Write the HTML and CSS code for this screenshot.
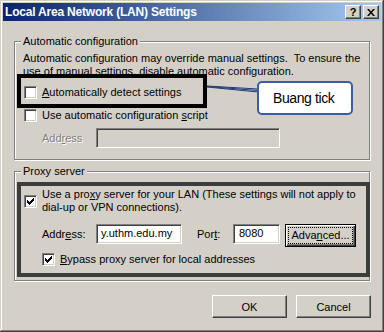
FILE: index.html
```html
<!DOCTYPE html>
<html lang="en">
<head>
  <meta charset="UTF-8">
  <title>Local Area Network (LAN) Settings</title>
  <link rel="stylesheet" href="styles.css">
</head>
<body>
  <div class="window">
    <div class="titlebar">
      <span class="title">Local Area Network (LAN) Settings</span>
      <span class="cap-buttons">
        <span class="cap-btn help">?</span>
        <span class="cap-btn">
          <svg width="8" height="7" viewBox="0 0 8 7"><path d="M0 0h2l2 2.5L6 0h2L5 3.5 8 7H6L4 4.5 2 7H0l3-3.5z"/></svg>
        </span>
      </span>
    </div>

    <div class="content">
      <fieldset class="group">
        <legend>Automatic configuration</legend>
        <p class="desc">Automatic configuration may override manual settings.&nbsp; To ensure the<br>use of manual settings, disable automatic configuration.</p>

        <div class="check-row first">
          <span class="check"></span>
          <span><u>A</u>utomatically detect settings</span>
        </div>
        <div class="check-row second">
          <span class="check"></span>
          <span>Use automatic configuration <u>s</u>cript</span>
        </div>
        <div class="field-row script-row">
          <span class="field-label disabled">Add<u>r</u>ess</span>
          <span class="textbox disabled-box script-box"></span>
        </div>
      </fieldset>

      <fieldset class="group proxy">
        <legend>Proxy server</legend>
        <div class="check-row proxy-row">
          <span class="check"><svg class="tick" width="7" height="7" viewBox="0 0 7 7"><path d="M6 0h1v3H6zM5 1h1v3H5zM4 2h1v3H4zM3 3h1v3H3zM2 4h1v3H2zM1 3h1v3H1zM0 2h1v3H0z"/></svg></span>
          <span class="two-lines">Use a pro<u>x</u>y server for your LAN (These settings will not apply to<br>dial-up or VPN connections).</span>
        </div>
        <div class="field-row proxy-fields">
          <span class="field-label">Addr<u>e</u>ss:</span>
          <span class="textbox addr-box">y.uthm.edu.my</span>
          <span class="field-label port-label">Por<u>t</u>:</span>
          <span class="textbox port-box">8080</span>
          <span class="btn default"><span class="focus">Adva<u>n</u>ced...</span></span>
        </div>
        <div class="check-row bypass-row">
          <span class="check"><svg class="tick" width="7" height="7" viewBox="0 0 7 7"><path d="M6 0h1v3H6zM5 1h1v3H5zM4 2h1v3H4zM3 3h1v3H3zM2 4h1v3H2zM1 3h1v3H1zM0 2h1v3H0z"/></svg></span>
          <span><u>B</u>ypass proxy server for local addresses</span>
        </div>
      </fieldset>

      <div class="actions">
        <span class="btn">OK</span>
        <span class="btn">Cancel</span>
      </div>
    </div>

    <!-- annotations drawn over the dialog -->
    <div class="mark mark-detect"></div>
    <div class="mark mark-proxy"></div>
    <svg class="connector" width="54" height="12" viewBox="0 0 54 12">
      <path d="M1 2 L52 5 M1 3 L52 8 M1 2.5 L52 6.5" stroke="#1f3a7a" stroke-width="1" fill="none"/>
    </svg>
    <div class="callout">Buang tick</div>
  </div>
</body>
</html>
```

FILE: styles.css
```css
body {
  margin: 0;
  font-family: "Liberation Sans", Arial, sans-serif;
  font-size: 11px;
  color: #000;
  background: #d4d0c8;
}

.window {
  position: relative;
  width: 384px;
  height: 332px;
  box-sizing: border-box;
  padding: 3px;
  background: #d4d0c8;
  box-shadow: inset -1px -1px #404040, inset 1px 1px #d4d0c8,
              inset -2px -2px #808080, inset 2px 2px #fff;
}

/* title bar */
.titlebar {
  display: flex;
  align-items: center;
  height: 18px;
  padding: 0 2px;
  background: linear-gradient(to right, #0a246a, #a6caf0);
}

.title {
  flex: 1;
  color: #fff;
  font-weight: bold;
  font-size: 12px;
  letter-spacing: -0.2px;
}

.cap-buttons {
  display: flex;
  gap: 2px;
}

.cap-btn {
  display: flex;
  align-items: center;
  justify-content: center;
  width: 16px;
  height: 14px;
  box-sizing: border-box;
  background: #d4d0c8;
  border: 1px solid;
  border-color: #fff #404040 #404040 #fff;
  box-shadow: inset -1px -1px #808080;
  font-weight: bold;
  font-size: 11px;
  line-height: 12px;
}

/* body */
.content {
  padding: 13px 11px 0;
}

.group {
  margin: 0;
  padding: 4px 8px 11px;
  min-width: 0;
  border: 1px solid #808080;
  box-shadow: inset 1px 1px #fff, 1px 1px #fff;
}

.group legend {
  margin-left: -2px;
  padding: 0 2px;
  line-height: 14px;
  background: #d4d0c8;
}

.group.proxy {
  margin-top: 4px;
  padding: 10px 8px 14px;
}

.desc {
  margin: 0;
  line-height: 13px;
}

.check-row {
  display: flex;
  align-items: center;
  gap: 5px;
  margin-left: 1px;
  line-height: 13px;
}

.check-row.first { margin-top: 8px; }
.check-row.second { margin-top: 10px; }
.check-row.bypass-row { margin: 6px 0 0 19px; }

.check {
  display: flex;
  align-items: center;
  justify-content: center;
  flex: none;
  width: 13px;
  height: 13px;
  box-sizing: border-box;
  background: #fff;
  border: 1px solid;
  border-color: #808080 #fff #fff #808080;
  box-shadow: inset 1px 1px #404040, inset -1px -1px #d4d0c8;
}

.field-row {
  display: flex;
  align-items: flex-start;
  padding-left: 19px;
}

.script-row { margin-top: 6px; }
.proxy-fields { margin-top: 10px; }

.field-label {
  width: 54px;
  line-height: 20px;
}

.field-label.disabled {
  color: #808080;
  text-shadow: 1px 1px #fff;
}

.port-label {
  width: 36px;
  margin-left: 15px;
}

.textbox {
  height: 20px;
  box-sizing: border-box;
  padding: 0 3px;
  line-height: 16px;
  background: #fff;
  border: 1px solid;
  border-color: #808080 #fff #fff #808080;
  box-shadow: inset 1px 1px #404040, inset -1px -1px #d4d0c8;
  white-space: nowrap;
  overflow: hidden;
}

.disabled-box { background: #d4d0c8; }
.script-box { width: 184px; }
.addr-box { width: 86px; padding-left: 4px; }
.port-box { width: 47px; padding-left: 5px; }

.btn {
  display: flex;
  align-items: center;
  justify-content: center;
  width: 75px;
  height: 23px;
  box-sizing: border-box;
  background: #d4d0c8;
  border: 1px solid;
  border-color: #fff #404040 #404040 #fff;
  box-shadow: inset -1px -1px #808080;
}

.btn.default {
  width: 71px;
  margin-left: 5px;
  border-color: #000;
  box-shadow: inset 1px 1px #fff, inset -1px -1px #404040, inset -2px -2px #808080;
}

.focus {
  padding: 1px 2px;
  outline: 1px dotted #000;
  line-height: 13px;
}

.actions {
  display: flex;
  justify-content: flex-end;
  gap: 9px;
  margin: 14px -1px 0 0;
}

/* annotations */
.mark {
  position: absolute;
  box-sizing: border-box;
}

.mark-detect {
  left: 17px;
  top: 74px;
  width: 190px;
  height: 34px;
  border: 4px solid #000;
}

.mark-proxy {
  left: 17px;
  top: 182px;
  width: 353px;
  height: 95px;
  border: 4px solid #3c3c3c;
}

.connector {
  position: absolute;
  left: 206px;
  top: 84px;
}

.callout {
  position: absolute;
  left: 257px;
  top: 81px;
  width: 96px;
  height: 34px;
  box-sizing: border-box;
  padding-left: 14px;
  background: #fff;
  border: 2px solid #3a5ba8;
  border-radius: 5px;
  font-size: 14px;
  letter-spacing: -0.4px;
  line-height: 30px;
}
```
